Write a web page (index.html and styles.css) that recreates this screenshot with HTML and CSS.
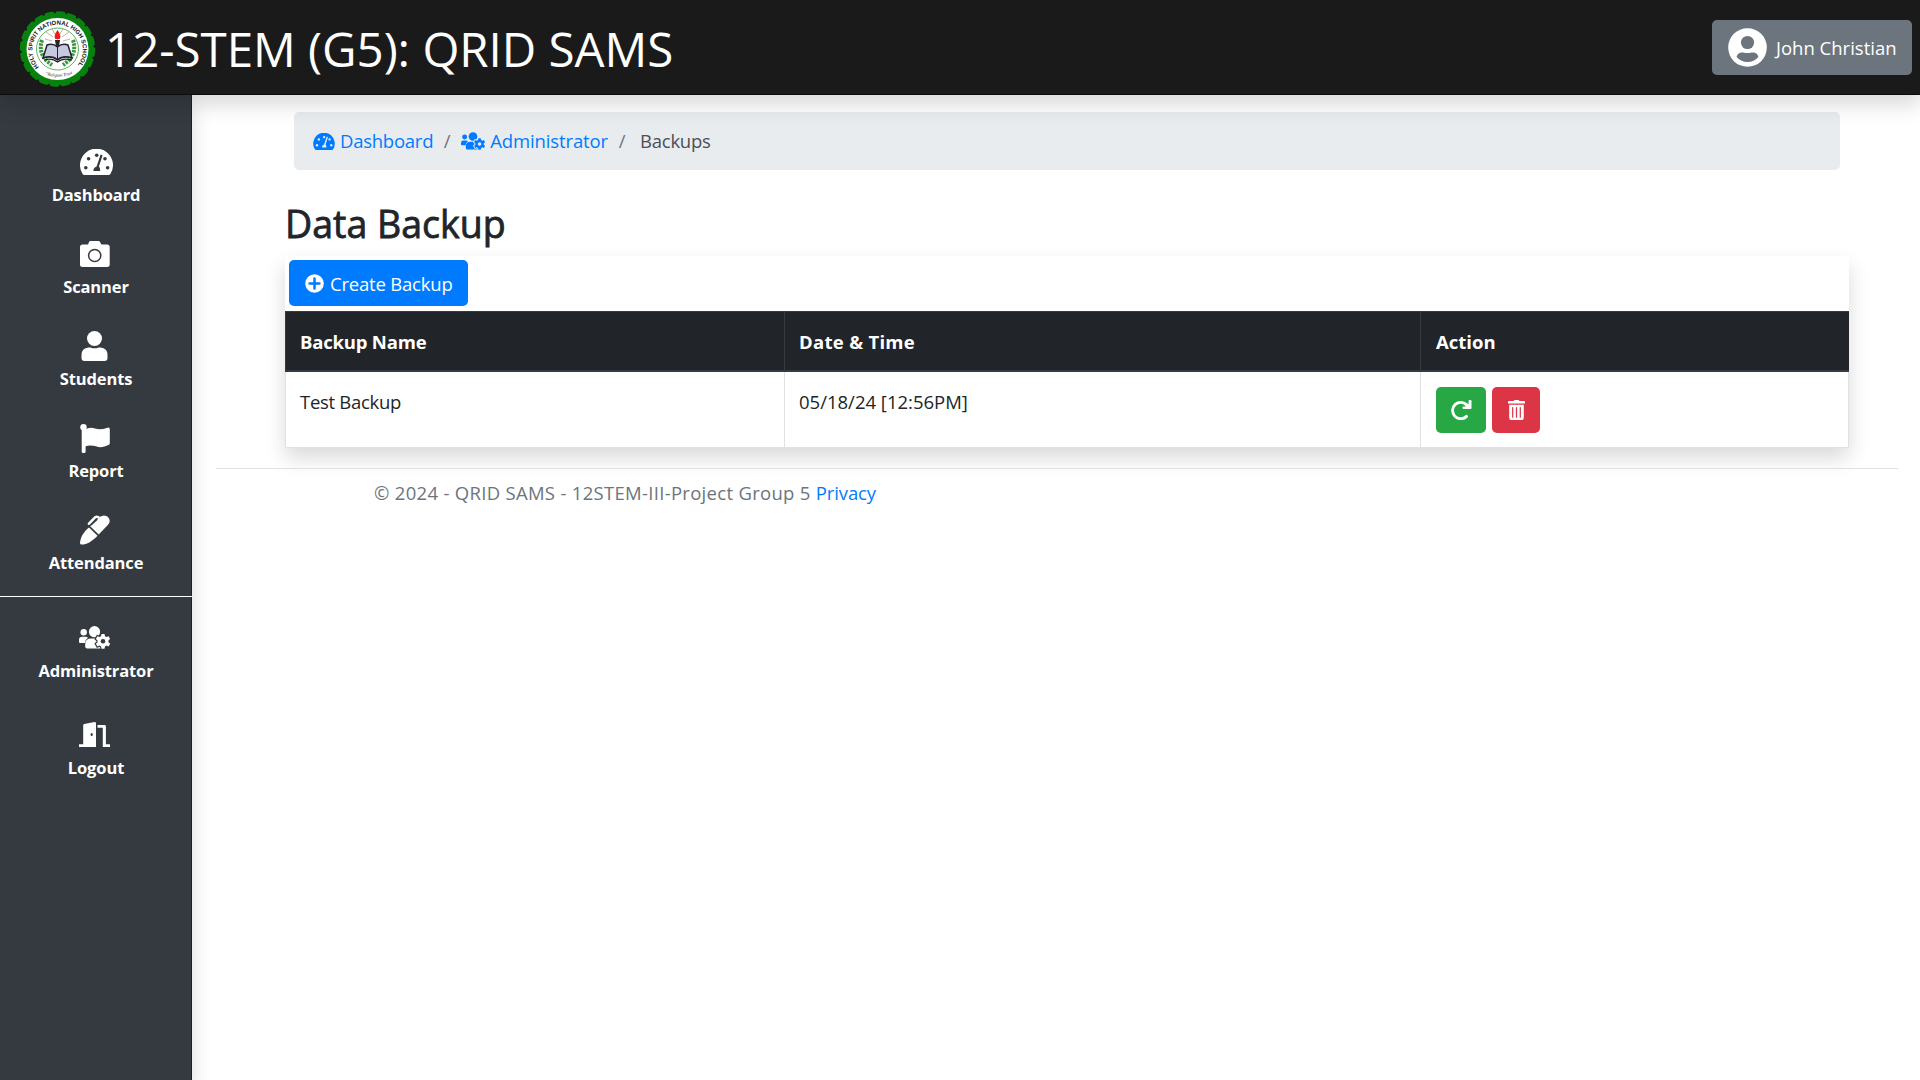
FILE: index.html
```html
<!DOCTYPE html>
<html lang="en">
<head>
<meta charset="utf-8">
<title>Backups - QRID SAMS</title>
<link rel="stylesheet" href="styles.css">
</head>
<body>
<svg class="defs" aria-hidden="true">
  <symbol id="gauge" viewBox="0 0 33 26">
    <path fill="currentColor" d="M2.6 25A16.5 16.5 0 1 1 30.4 25Q29.8 26 28.6 26H4.4Q3.2 26 2.6 25Z"/>
    <g class="cut"><circle cx="5.8" cy="18.7" r="1.8"/><circle cx="8.6" cy="9.8" r="1.8"/><circle cx="16.7" cy="6.2" r="1.8"/><circle cx="25" cy="9.8" r="1.8"/><circle cx="27.6" cy="18.7" r="1.8"/>
    <path d="M20.6 5.6 22.6 6.3 18.9 17.6Q20.2 18.6 20.2 22H13.4Q13.2 18.4 16.6 17.4Z"/></g>
  </symbol>
  <symbol id="admins" viewBox="0 0 31 23">
    <g fill="currentColor"><circle cx="4.7" cy="6.3" r="3.2"/><circle cx="15.5" cy="5.7" r="5.6"/>
    <path d="M3.2 10.8H6.4Q7.9 10.8 9 11.8Q6.3 13.6 5.9 17H1Q0 17 0 16V14Q0 10.8 3.2 10.8Z"/>
    <path d="M12 12.5H19Q24 13.5 24 19V22.6H8.2Q6.2 22.6 6.2 20.6V18.4Q6.2 12.5 12 12.5Z"/></g>
    <path class="gear-edge" d="M22.5 8h3l.5 2.2 1.5.9 2.1-.8 1.5 2.7-1.7 1.5v1.7l1.7 1.5-1.5 2.7-2.1-.8-1.5.9-.5 2.2h-3l-.5-2.2-1.5-.9-2.1.8-1.5-2.7 1.7-1.5v-1.7l-1.7-1.5 1.5-2.7 2.1.8 1.5-.9Z"/>
    <path fill="currentColor" d="M22.5 8h3l.5 2.2 1.5.9 2.1-.8 1.5 2.7-1.7 1.5v1.7l1.7 1.5-1.5 2.7-2.1-.8-1.5.9-.5 2.2h-3l-.5-2.2-1.5-.9-2.1.8-1.5-2.7 1.7-1.5v-1.7l-1.7-1.5 1.5-2.7 2.1.8 1.5-.9Z"/>
    <circle class="cut" cx="24" cy="15.3" r="2.3"/>
  </symbol>
</svg>

<header class="topbar">
  <a class="brand">
    <svg class="seal" viewBox="0 0 77 74">
      <circle cx="38.5" cy="37" r="36" fill="#08820f"/>
      <circle cx="38.5" cy="37" r="35.7" fill="none" stroke="#08820f" stroke-width="4" stroke-linecap="round" stroke-dasharray="6 5.2"/>
      <circle cx="38.5" cy="37" r="31" fill="#fff"/>
      <circle cx="38.5" cy="37" r="21" fill="#fff" stroke="#399b3d" stroke-width=".8"/>
      <path id="ring" d="M20 55A25.2 25.2 0 1 1 57 55" fill="none"/>
      <text class="seal-name"><textPath href="#ring" startOffset="0">HOLY SPIRIT NATIONAL HIGH SCHOOL</textPath></text>
      <path d="M23 28Q18 43 33 53M54 28Q59 43 44 53" fill="none" stroke="#36963b" stroke-width="4" stroke-dasharray="2.4 1"/>
      <path d="M38.5 30V18M34 25 27 20M43 25 50 20M36 22 33 17M41 22 44 17M33 29 26 27M44 29 51 27" stroke="#b5a184" stroke-width=".8"/>
      <path d="M38.5 18q4.500 6 2.200 9h-4.400q-2.200-3 2.200-9Z" fill="#ef1b1b"/>
      <path d="M36 28h5l-1.200 8h-2.600Z" fill="#26262c"/>
      <path d="M28 33Q34 31 38.500 35 43 31 49 33L53 46Q44 43 38.500 48 33 43 24 46Z" fill="#c6c9df" stroke="#23232c" stroke-width="1.500"/>
      <path d="M38.500 35V47" stroke="#23232c"/>
      <path d="M25 48Q33 45.500 38.500 50 44 45.500 53 48" fill="none" stroke="#23232c" stroke-width="1.300"/>
      <path id="motto" d="M25 62Q38.500 67.500 53 62" fill="none"/>
      <text class="seal-motto"><textPath href="#motto" startOffset="1">“Religion Trust”</textPath></text>
    </svg>
    <span class="brand-name">12-STEM (G5): QRID SAMS</span>
  </a>
  <button class="user">
    <svg width="39" height="39" viewBox="0 0 39 39"><circle cx="19.500" cy="19.500" r="19.300" fill="#fff"/><circle cx="19.500" cy="14.500" r="6.600" fill="#6c757d"/><path d="M8.600 29Q9.500 24.400 14 24.400H15.500Q19.500 25.400 23.500 24.400H25Q29.500 24.400 30.400 29 26 34 19.500 34T8.600 29Z" fill="#6c757d"/></svg>
    <span>John Christian</span>
  </button>
</header>

<div class="shell">
  <nav class="sidebar">
    <div class="group">
      <a class="item"><span class="glyph centered"><svg width="33" height="26"><use href="#gauge"/></svg></span><span>Dashboard</span></a>
      <a class="item"><span class="glyph"><svg width="30" height="26" viewBox="0 0 30 26"><path fill="#fff" d="M8 3.500 9 1Q9.400 0 10.500 0H18.500Q19.600 0 20 1L21.500 3.500H27Q29.700 3.500 29.700 6V23.500Q29.700 26 27 26H2.700Q0 26 0 23.500V6Q0 3.500 2.700 3.500Z"/><circle cx="14.700" cy="14.500" r="6.100" fill="none" stroke="#343a40" stroke-width="1.500"/></svg></span><span>Scanner</span></a>
      <a class="item"><span class="glyph"><svg width="27" height="30" viewBox="0 0 27 30"><circle cx="13.500" cy="7.500" r="7.500" fill="#fff"/><path fill="#fff" d="M7.500 16.500H9.500Q13.500 18.200 17.500 16.500H19.500Q26.500 17 26.500 24V27Q26.500 30 23.500 30H3.500Q.5 30 .5 27V24Q.5 17 7.500 16.500Z"/></svg></span><span>Students</span></a>
      <a class="item"><span class="glyph"><svg width="30" height="29" viewBox="0 0 30 29"><g fill="#fff"><circle cx="3.500" cy="3.200" r="3.200"/><path d="M1.700 3H5.600V27.500Q5.600 29 4.200 29H3.100Q1.700 29 1.700 27.500Z"/><path d="M5 5.500Q10 2.500 15 4.500 20 6.500 27.500 3.700 29.800 3 29.800 5.200V19Q29.800 20.300 28.500 21 22 24.500 16 22.300 10 20.500 5 22.500Z"/></g></svg></span><span>Report</span></a>
      <a class="item"><span class="glyph"><svg width="30" height="30" viewBox="0 0 30 30"><g fill="#fff"><path d="M9 12.400 17.500 20.700C12.500 26 7 29.500 1.500 29.500Q0 29.500 0 28C.3 22 4 16.500 9 12.400Z"/><path d="M10.200 11.200 19.500 2Q24.500-1.200 28 2 31.500 6 27.800 10L18.700 19.500Z"/></g><path d="M9 8.700 15.300 2.200Q16.600 1.300 18.300 2.200" fill="none" stroke="#fff" stroke-width="2.600" stroke-linecap="round"/><path d="M11 10 17.300 4.200" stroke="#343a40" stroke-width="1.300"/></svg></span><span>Attendance</span></a>
    </div>
    <div class="group admin">
      <a class="item"><span class="glyph"><svg width="31" height="23"><use href="#admins"/></svg></span><span>Administrator</span></a>
      <a class="item"><span class="glyph"><svg width="31" height="25" viewBox="0 0 31 25"><path fill="#fff" d="M0 22.300H4.200V3.200Q4.200 2.200 5.200 2L15.500 0Q17 0 17 1.200V25H0ZM18.500 3H25.500Q26.900 3 26.900 4.400V22.300H31V25H23.800V5.800H18.500Z"/><ellipse cx="12.700" cy="12.500" rx="1.100" ry="1.500" fill="#343a40"/></svg></span><span>Logout</span></a>
    </div>
  </nav>

  <div class="page">
    <main>
      <nav class="crumbs">
        <a><svg width="22" height="17"><use href="#gauge"/></svg><span class="crumb-dash">Dashboard</span></a>
        <i>/</i>
        <a><svg width="24" height="18"><use href="#admins"/></svg><span class="crumb-admin">Administrator</span></a>
        <i>/</i>
        <span class="current">Backups</span>
      </nav>
      <h1>Data Backup</h1>
      <section class="card">
        <div class="tools">
          <button class="create"><svg width="19" height="19" viewBox="0 0 19 19"><circle cx="9.500" cy="9.500" r="9.300" fill="#fff"/><path d="M9.500 4.600V14.400M4.600 9.500H14.400" stroke="#007bff" stroke-width="2.500" stroke-linecap="round"/></svg><span>Create Backup</span></button>
        </div>
        <table>
          <thead><tr><th class="col-name">Backup Name</th><th class="col-date">Date &amp; Time</th><th class="col-action">Action</th></tr></thead>
          <tbody><tr>
            <td><span class="tight">Test Backup</span></td>
            <td>05/18/24 [12:56PM]</td>
            <td class="col-action"><div class="actions">
              <button class="restore"><svg width="21" height="20" viewBox="0 0 21 20"><path d="M16 5.200A8.200 8.200 0 1 0 15.500 16.400" fill="none" stroke="#fff" stroke-width="2.900" stroke-linecap="round"/><path d="M17.600 1Q17.600 0 18.600 0H19.500Q20.500 0 20.500 1V8Q20.500 9 19.500 9H12.500Q11.500 9 11.500 8V7.500Q11.500 6.500 12.500 6.500H15L14 4.500 15.500 3 17.600 4.500Z" fill="#fff"/></svg></button>
              <button class="delete"><svg width="17" height="20" viewBox="0 0 17 20"><path fill="#fff" d="M5.500 1Q6 0 7 0H10Q11 0 11.500 1H16.200Q17 1 17 1.800V3.500H0V1.800Q0 1 .8 1ZM1.200 4.800H15.800V18Q15.800 20 13.800 20H3.200Q1.200 20 1.200 18Z"/><path d="M4.700 7.500V17.200M8.500 7.500V17.200M12.300 7.500V17.200" stroke="#dc3545" stroke-width="1.200" stroke-linecap="round"/></svg></button>
            </div></td>
          </tr></tbody>
        </table>
      </section>
    </main>
    <footer><span class="copyright">© 2024 - QRID SAMS - 12STEM-III-Project Group 5</span><a>Privacy</a></footer>
  </div>
</div>
</body>
</html>
```
FILE: styles.css
```css
* { box-sizing: border-box; }
body {
  margin: 0;
  height: 1080px;
  overflow: hidden;
  display: flex;
  flex-direction: column;
  background: #fff;
  color: #212529;
  font: 18.5px/28px "Open Sans", "Noto Sans", sans-serif;
}
svg { display: block; flex: none; }
button { border: 0; font: inherit; color: #fff; border-radius: 5px; display: flex; align-items: center; }
.defs { position: absolute; width: 0; height: 0; }
.cut { fill: var(--behind); }
.gear-edge { fill: var(--behind); stroke: var(--behind); stroke-width: 2.4; }

.topbar {
  position: relative;
  z-index: 2;
  flex: none;
  height: 95px;
  padding: 0 8px 0 19px;
  display: flex;
  align-items: center;
  justify-content: space-between;
  background: #1a1a1a;
  border-bottom: 1px solid #0b0b0b;
  box-shadow: 0 9.6px 19.2px rgba(0, 0, 0, .15);
}
.brand { display: flex; align-items: center; gap: 9px; padding-top: 3px; color: #fff; }
.brand-name { font-size: 47.5px; line-height: 60px; letter-spacing: -.03px; }
.seal { width: 77px; height: 74px; overflow: visible; }
.seal-name { font: 700 6px "Liberation Sans Narrow", "Liberation Sans", sans-serif; fill: #111; }
.seal-motto { font: italic 4.5px "Liberation Serif", serif; fill: #222; }
.user { width: 200px; height: 55px; padding: 0 0 0 16px; gap: 9px; background: #6c757d; }
.user span { padding-top: 2px; }

.shell { flex: 1; display: flex; }
.sidebar {
  --behind: #343a40;
  width: 192px;
  flex: none;
  padding-top: 52px;
  background: #343a40;
  color: #fff;
  box-shadow: inset -1px 0 #14222e, 0 9.6px 19.2px rgba(0, 0, 0, .15);
}
.group { display: flex; flex-direction: column; gap: 32px; padding-bottom: 21px; }
.admin { gap: 37px; border-top: 1px solid #fff; padding-top: 26px; }
.item {
  display: flex;
  flex-direction: column;
  align-items: center;
  gap: 6px;
  height: 60px;
  font-size: 16.5px;
  font-weight: 700;
  line-height: 24px;
  letter-spacing: -.12px;
}
.glyph { height: 30px; display: flex; align-items: center; margin-right: 3px; }
.glyph.centered { margin-right: 0; }
.admin .item { gap: 8px; }

.page { flex: 1; padding: 17px 22px 0 24px; }
main { padding: 0 49px 0 69px; }
.crumbs {
  --behind: #e9ecef;
  height: 58px;
  margin: 0 9px;
  padding-left: 19px;
  border-radius: 5px;
  background: #e9ecef;
  display: flex;
  align-items: center;
  color: #495057;
}
.crumbs a { display: flex; align-items: center; gap: 5px; color: #007bff; }
.crumbs i { width: 28px; text-align: center; font-style: normal; color: #6c757d; }
.crumb-dash { letter-spacing: -.25px; }
.crumb-admin { letter-spacing: -.12px; }
.current { padding-left: 4px; letter-spacing: -.25px; }
h1 {
  margin: 31px 0 9px;
  font-size: 37.5px;
  line-height: 46px;
  font-weight: 500;
  -webkit-text-stroke: .8px currentColor;
}
.card { background: #fff; box-shadow: 0 9.6px 19.2px rgba(0, 0, 0, .15); }
.tools { height: 55px; padding: 4px; }
.create { width: 179px; height: 46px; padding: 0 0 0 16px; gap: 6px; background: #007bff; letter-spacing: -.2px; }
.create span { padding-top: 2px; }

table { width: 100%; border-collapse: separate; border-spacing: 0; table-layout: fixed; }
th, td { text-align: left; padding: 0 0 0 14px; border-left: 1px solid #dee2e6; }
th {
  height: 61px;
  padding-top: 2px;
  background: #212529;
  color: #fff;
  border: solid #343a40;
  border-width: 1px 0 2px 1px;
}
.col-name { width: 499px; letter-spacing: -.2px; }
.col-date { width: 636px; letter-spacing: .3px; }
.col-action { padding-left: 15px; }
td { height: 76px; padding-top: 15px; vertical-align: top; line-height: 29px; border-bottom: 1px solid #dee2e6; }
td:last-child { border-right: 1px solid #dee2e6; }
.tight { letter-spacing: -.3px; }
.actions { display: flex; gap: 6px; }
.actions button { height: 46px; padding: 0; justify-content: center; }
.restore { width: 50px; background: #28a745; }
.delete { width: 48px; background: #dc3545; }

footer {
  margin-top: 20px;
  border-top: 1px solid #dee2e6;
  padding: 10px 0 0 158px;
  display: flex;
  gap: 5px;
  color: #6c757d;
}
.copyright { letter-spacing: .3px; }
footer a { color: #007bff; letter-spacing: -.1px; }
```
